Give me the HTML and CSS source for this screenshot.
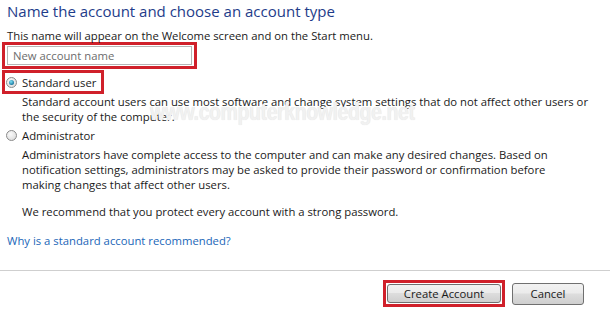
FILE: index.html
```html
<!DOCTYPE html>
<html>
<head>
<meta charset="utf-8">
<link rel="stylesheet" href="styles.css">
</head>
<body>
<div class="page">
  <div class="content">
    <h1 class="title">Name the account and choose an account type</h1>
    <p class="intro">This name will appear on the Welcome screen and on the Start menu.</p>
    <div class="hl hl-input"><div class="input">New account name</div></div>
    <div class="option">
      <div class="hl hl-radio"><span class="radio checked"></span><span class="label">Standard user</span></div>
      <p class="desc">Standard account users can use most software and change system settings that do not affect other users or<br>the security of the computer.</p>
    </div>
    <div class="option">
      <div class="radio-row"><span class="radio"></span><span class="label">Administrator</span></div>
      <p class="desc">Administrators have complete access to the computer and can make any desired changes. Based on<br>notification settings, administrators may be asked to provide their password or confirmation before<br>making changes that affect other users.</p>
      <p class="desc rec">We recommend that you protect every account with a strong password.</p>
    </div>
    <a class="link">Why is a standard account recommended?</a>
    <div class="watermark">www.computerknowledge.net</div>
  </div>
  <div class="footer">
    <div class="hl hl-btn"><button class="btn create">Create Account</button></div>
    <button class="btn cancel">Cancel</button>
  </div>
</div>
</body>
</html>
```
FILE: styles.css
```css
* { box-sizing: border-box; }
html, body { margin: 0; padding: 0; background: #fff; }
body { font-family: "Open Sans", "Noto Sans", sans-serif; font-size: 11.3px; color: #1a1a1a; }
.page { width: 610px; height: 313px; display: flex; flex-direction: column; }
.content { position: relative; height: 271px; padding: 0 0 0 7px; border-bottom: 1px solid #cfcfcf; }
.title { margin: 0; padding-top: 1px; font-size: 15px; font-weight: normal; color: #1e3c8a; line-height: 20px; }
.intro { margin: 7px 0 0; line-height: 15px; }
.hl { border: 3px solid #d0202a; }
.hl-input { width: 195px; height: 27px; margin: -1px 0 0 -5px; padding: 1px 2px 1px 2px; }
.input { border: 1px solid #b5b5b5; height: 19px; padding-left: 5px; line-height: 17px; color: #6d6d6d; background: #fff; }
.option { margin-top: 1px; }
.hl-radio { display: inline-flex; align-items: center; margin-left: -5px; padding: 1px 5px 1px 1px; height: 24px; }
.radio-row { display: flex; align-items: center; height: 15px; margin-left: -1px; margin-bottom: 4px; }
.radio { width: 11px; height: 11px; border-radius: 50%; border: 1px solid #8a8a8a; background: radial-gradient(circle at 40% 35%, #fafafa, #d6d6d6); display: inline-block; margin-right: 5px; position: relative; }
.radio.checked::after { content: ""; position: absolute; left: 2px; top: 2px; width: 5px; height: 5px; border-radius: 50%; background: radial-gradient(circle at 40% 35%, #7fe3f7, #0d6a94 80%); }
.label { line-height: 15px; }
.desc { margin: 0 10px 0 15px; line-height: 15px; }
.option + .option { margin-top: 4px; }
.rec { margin-top: 12px; }
.link { display: block; margin-top: 14px; color: #1a66b8; line-height: 15px; }
.watermark { position: absolute; left: 150px; top: 99px; font-family: "Liberation Sans", sans-serif; font-size: 23px; font-weight: bold; color: #f1f1f1; letter-spacing: -0.5px; text-shadow: 0 0 1px #dedede; transform: scaleX(0.85); transform-origin: left top; }
.footer { display: flex; justify-content: flex-end; align-items: center; gap: 7px; padding: 9px 26px 0 0; }
.btn { font-family: inherit; font-size: 11.3px; color: #1a1a1a; height: 20px; border: 1px solid #707070; border-radius: 3px; background: linear-gradient(#f2f2f2 0%, #ebebeb 45%, #dddddd 50%, #cfcfcf 100%); padding: 0; }
.hl-btn { padding: 1px; }
.create { width: 114px; height: 19px; }
.cancel { width: 72px; height: 22px; }
```
